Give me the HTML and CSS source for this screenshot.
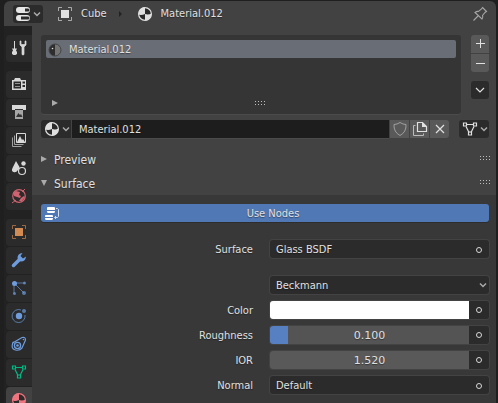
FILE: index.html
```html
<!DOCTYPE html>
<html lang="en">
<head>
<meta charset="utf-8">
<title>Material Properties</title>
<link rel="stylesheet" href="styles.css">
</head>
<body>
<svg class="defs" aria-hidden="true">
  <symbol id="ball" viewBox="0 0 16 16"><circle cx="8" cy="8" r="6.4" fill="#2b2b2b" stroke="currentColor" stroke-width="1.2"/><path d="M8 8V1.300C5 1.200 1.600 3.600 1.300 8.500Q4.500 9.500 8 8Z" fill="currentColor"/><path d="M8 8Q11.500 9 14.600 7.500C14.500 12 11 14.700 8 14.700Z" fill="currentColor"/></symbol>
  <symbol id="chev" viewBox="0 0 8 8"><path d="M1 2.500L4 5.500L7 2.500" fill="none" stroke="currentColor" stroke-width="1.500"/></symbol>
  <symbol id="object" viewBox="0 0 16 16"><path d="M4 4h8v8H4z" fill="currentColor"/><path d="M1.500 5V1.500H5M11 1.500h3.500V5M14.500 11v3.500H11M5 14.500H1.500V11" fill="none" stroke="currentColor" opacity=".65"/></symbol>
  <symbol id="mesh" viewBox="0 0 16 16"><path d="M4.500 3.500h7M4 5.500l3 6M12 5.500l-3 6" fill="none" stroke="currentColor" stroke-width="1.200"/><path d="M1.500 2h3v3h-3zM11.500 2h3v3h-3zM6.500 11h3v3h-3z" fill="none" stroke="currentColor" stroke-width="1.200"/></symbol>
  <symbol id="right" viewBox="0 0 6 6"><path d="M0 0L6 3L0 6z" fill="currentColor"/></symbol>
  <symbol id="down" viewBox="0 0 6 6"><path d="M0 0H6L3 6z" fill="currentColor"/></symbol>
  <symbol id="grip" viewBox="0 0 11 4"><path d="M0 0h1v1H0zM3 0h1v1H3zM6 0h1v1H6zM9 0h1v1H9zM0 3h1v1H0zM3 3h1v1H3zM6 3h1v1H6zM9 3h1v1H9z" fill="currentColor"/></symbol>
</svg>
<div class="editor">
  <header class="header">
    <button class="dark editor-type" aria-label="Editor type">
      <svg class="icon" viewBox="0 0 16 16"><rect x="1" y="1" width="14" height="6" rx="3" fill="#e6e6e6"/><rect x="1" y="9" width="14" height="6" rx="3" fill="#e6e6e6"/><path d="M10 2.500h3a1.500 1.500 0 0 1 0 3h-3zM6 10.500h7a1.500 1.500 0 0 1 0 3H6z" fill="#2b2b2b"/></svg>
      <svg class="chev"><use href="#chev"/></svg>
    </button>
    <nav class="crumbs" aria-label="Context">
      <svg class="icon"><use href="#object"/></svg><span class="crumb">Cube</span>
      <svg class="crumb-arrow" viewBox="0 0 4 6"><path d="M0 0L3 3L0 6z" fill="#222"/></svg>
      <svg class="icon"><use href="#ball"/></svg><span class="crumb">Material.012</span>
    </nav>
    <button class="pin" aria-label="Pin"><svg class="icon" viewBox="0 0 16 16"><path d="M1.500 14.500L6 10M10.500 1.500L14.500 5.500L13 6.500L10.500 9.500Q11.500 11.500 10 13L3 6.500Q5 5 6.500 5.500L9.500 3z" fill="none" stroke="#a5a5a5" stroke-width="1.100"/></svg></button>
  </header>
  <div class="columns">
    <nav class="tabs" aria-label="Property tabs">
      <button class="tab lone" aria-label="Tool"><svg class="icon" viewBox="0 0 16 16"><path d="M3.500 1v8" stroke="currentColor"/><path d="M1 8.500h5L5 10.500L6 12v2L4.500 15h-2L1 14v-2l1-1.500z" fill="currentColor"/><path d="M9 1v4L11 7v7.500Q12 15.500 13 14.500V7L15 5V1h-1v3.500h-4V1z" fill="currentColor" stroke="currentColor" stroke-width=".7"/></svg></button>
      <button class="tab" aria-label="Render"><svg class="icon" viewBox="0 0 16 16"><path fill-rule="evenodd" d="M1 4h2l1-2h5l1 2h5v10H1zM2.500 5.500v7H10v-7zM11.500 5.500v2H14v-2zM11.500 9v2H14V9z" fill="currentColor"/><path d="M4 7.500h5M4 10.500h5" stroke="currentColor" opacity=".6"/></svg></button>
      <button class="tab" aria-label="Output"><svg class="icon" viewBox="0 0 16 16"><path d="M1 1h14v5H1z" fill="currentColor"/><path d="M4 5h8v10H4z" fill="#a6a6a6"/><path d="M4 5h8v1H4zM5 13l2.500-4 1.500 2 1-1 1.500 3z" fill="#333"/></svg></button>
      <button class="tab" aria-label="View layer"><svg class="icon" viewBox="0 0 16 16"><path d="M5.500 1.500h9v9h-9z" fill="none" stroke="currentColor"/><path d="M6 10l3-6 2 4 1-1 2 3z" fill="currentColor"/><path d="M3.500 3.500v9h9M1.500 5.500v9h9" fill="none" stroke="#a0a0a0"/></svg></button>
      <button class="tab" aria-label="Scene"><svg class="icon" viewBox="0 0 16 16"><path d="M5 1L8.500 7Q9 9 7 10Q5 13 2.500 12T1.500 8z" fill="currentColor"/><circle cx="12.500" cy="3.500" r="2.200" fill="currentColor"/><circle cx="11" cy="11" r="3.500" fill="#2b2b2b" stroke="currentColor" stroke-width="1.200"/></svg></button>
      <button class="tab last world" aria-label="World"><svg class="icon" viewBox="0 0 16 16"><circle cx="8" cy="8" r="6.300" fill="none" stroke="currentColor" stroke-width="1.200"/><path d="M2 5L5 3L9 4L8 7L10 8L9 10L6 9L3 8zM10 10L13 8L14 9L11 13L8 13z" fill="currentColor"/><path d="M11 4l3-3" stroke="currentColor"/><path d="M1 15l4-3" stroke="currentColor"/></svg></button>
      <button class="tab object" aria-label="Object"><svg class="icon"><use href="#object"/></svg></button>
      <button class="tab blue" aria-label="Modifiers"><svg class="icon" viewBox="0 0 16 16"><path d="M2.500 13.500L9 7" stroke="currentColor" stroke-width="3.500" stroke-linecap="round"/><path d="M8 9L6.500 6Q6.500 1.500 11.500 1L9.500 4L12 6.500L15 4.500Q14.500 9.500 10 9.500z" fill="currentColor"/></svg></button>
      <button class="tab blue" aria-label="Particles"><svg class="icon" viewBox="0 0 16 16"><path d="M3 3H14M3 3V14M3 3L13 13" stroke="currentColor" opacity=".65"/><circle cx="3.500" cy="3.500" r="2.500" fill="currentColor"/><g fill="currentColor" opacity=".7"><circle cx="13.500" cy="3" r="1.500"/><circle cx="3.500" cy="13.500" r="1.500"/><circle cx="13" cy="13" r="2"/></g></svg></button>
      <button class="tab blue" aria-label="Physics"><svg class="icon" viewBox="0 0 16 16"><path d="M10 2A6.500 6.500 0 1 0 14 7" fill="none" stroke="currentColor" opacity=".7"/><circle cx="8" cy="8" r="3.200" fill="currentColor"/><circle cx="13" cy="3" r="2" fill="currentColor" opacity=".7"/></svg></button>
      <button class="tab blue" aria-label="Constraints"><svg class="icon" viewBox="0 0 16 16"><path d="M2.500 6.500L11 1.500Q14.500 .5 14.500 4L11 12Q8.500 15 4.500 14T1.300 9T2.500 6.500z" fill="none" stroke="currentColor" stroke-width="1.200"/><circle cx="6.500" cy="9.500" r="3.100" fill="none" stroke="currentColor" stroke-width="1.300"/><circle cx="6.500" cy="9.500" r="1.300" fill="currentColor"/><circle cx="12.500" cy="3.500" r=".8" fill="currentColor"/></svg></button>
      <button class="tab mesh" aria-label="Object data"><svg class="icon"><use href="#mesh"/></svg></button>
      <button class="tab active" aria-label="Material" aria-current="page"><svg class="icon"><use href="#ball"/></svg></button>
    </nav>
    <main class="main">
      <section class="slots">
        <div class="list">
          <button class="slot"><svg class="icon" viewBox="0 0 16 16"><circle cx="8" cy="8" r="6" fill="#747474"/><path d="M8 2a6 6 0 0 0 0 12z" fill="#2e2e2e"/><circle cx="8" cy="8" r="6" fill="none" stroke="#444"/><circle cx="5.500" cy="6.500" r=".8" fill="#ddd"/></svg>Material.012</button>
          <div class="list-foot"><svg class="tri"><use href="#right"/></svg><svg class="grip"><use href="#grip"/></svg></div>
        </div>
        <div class="side">
          <button class="gray top" aria-label="Add slot"><svg class="icon" viewBox="0 0 16 16"><path d="M4 7.500h9M8.500 3v9" stroke="currentColor" stroke-width="1"/></svg></button>
          <button class="gray bottom" aria-label="Remove slot"><svg class="icon" viewBox="0 0 16 16"><path d="M4 8.500h9" stroke="currentColor"/></svg></button>
          <button class="dark specials" aria-label="Slot menu"><svg class="icon" viewBox="0 0 16 16"><path d="M4 6l4 4 4-4" fill="none" stroke="currentColor" stroke-width="1.200"/></svg></button>
        </div>
      </section>
      <div class="datablock">
        <button class="dark browse" aria-label="Browse material"><svg class="icon"><use href="#ball"/></svg><svg class="chev"><use href="#chev"/></svg></button>
        <input class="name" aria-label="Material name" value="Material.012">
        <button class="gray" aria-label="Fake user"><svg class="icon" viewBox="0 0 16 16"><path d="M8 1.500Q11 3.500 14 3.500Q14.500 11 8 14.500Q1.500 11 2 3.500Q5 3.500 8 1.500z" fill="none" stroke="#a0a0a0"/></svg></button>
        <button class="gray" aria-label="New material"><svg class="icon" viewBox="0 0 16 16"><path d="M5.500 1.500h5l4 4v5h-9z" fill="none" stroke="currentColor" stroke-width="1.200"/><path d="M10 1v5h5z" fill="currentColor"/><path d="M3.500 4.500h-2v10h10v-2" fill="none" stroke="#bbb"/></svg></button>
        <button class="gray end" aria-label="Unlink"><svg class="icon" viewBox="0 0 16 16"><path d="M4 4l8 8M12 4l-8 8" stroke="currentColor" stroke-width="1.200"/></svg></button>
        <button class="dark link" aria-label="Link to"><svg class="icon"><use href="#mesh"/></svg><svg class="chev"><use href="#chev"/></svg></button>
      </div>
      <button class="panel-head" aria-expanded="false"><svg class="tri"><use href="#right"/></svg><span>Preview</span><svg class="grip"><use href="#grip"/></svg></button>
      <button class="panel-head" aria-expanded="true"><svg class="tri"><use href="#down"/></svg><span>Surface</span><svg class="grip"><use href="#grip"/></svg></button>
      <section class="panel">
        <button class="use-nodes" aria-pressed="true"><svg class="icon" viewBox="0 0 16 16"><path d="M4 2h6q1 0 1 1v2H3V3q0-1 1-1zM3 6h8q0 2-1 2H4Q3 8 3 6zM2 10h6q1 0 1 1v1H1v-1q0-1 1-1zM1 13h8q0 2-1 2H2q-1 0-1-2z" fill="#fff"/><path d="M12 3.500h1.500l1 1v7l-1 1H11M12 11l-1.500 1.500L12 14" fill="none" stroke="#d4deef"/></svg><span>Use Nodes</span></button>
        <div class="row surface"><label for="surface">Surface</label><button class="dark value" id="surface">Glass BSDF<i class="socket"></i></button></div>
        <div class="row"><span></span><div class="choice"><select class="dark" aria-label="Distribution"><option>Beckmann</option></select><svg class="chev"><use href="#chev"/></svg></div></div>
        <div class="row"><label for="color">Color</label><div class="pair"><input id="color" type="color" value="#ffffff"><button class="dark dot" aria-label="Color input"><i class="socket"></i></button></div></div>
        <div class="row"><label for="rough">Roughness</label><div class="pair"><input class="number slider" id="rough" value="0.100"><button class="dark dot" aria-label="Roughness input"><i class="socket"></i></button></div></div>
        <div class="row"><label for="ior">IOR</label><div class="pair"><input class="number" id="ior" value="1.520"><button class="dark dot" aria-label="IOR input"><i class="socket"></i></button></div></div>
        <div class="row"><label for="normal">Normal</label><button class="dark value" id="normal">Default<i class="socket"></i></button></div>
      </section>
    </main>
  </div>
</div>
</body>
</html>
```
FILE: styles.css
```css
* { box-sizing: border-box; }
html, body { height: 100%; }
body {
  margin: 0;
  padding: 1px 2px 0 4px;
  overflow: hidden;
  background: #1f1f1f;
  color: #e0e0e0;
  font: 11px/16px "DejaVu Sans Condensed", "DejaVu Sans", sans-serif;
  text-shadow: 0 1px 1px rgba(0, 0, 0, .4);
}
button, input, select {
  margin: 0;
  padding: 0;
  border: 0;
  border-radius: 0;
  background: none;
  color: inherit;
  font: inherit;
  text-shadow: inherit;
  min-width: 0;
}
svg { flex: none; display: block; }
.defs { position: absolute; width: 0; height: 0; }
.icon { width: 16px; height: 16px; }
.chev { width: 8px; height: 8px; color: #aaa; }
.tri { width: 6px; height: 6px; color: #aaa; }
.grip { width: 11px; height: 4px; color: #bdbdbd; }

.editor {
  height: 100%;
  display: flex;
  flex-direction: column;
  border-radius: 6px 6px 0 0;
  overflow: hidden;
  background: #424242;
}
.header { display: flex; align-items: center; height: 25px; padding: 0 8px 0 9px; flex: none; }
.dark { background: #2b2b2b; border-radius: 3px; box-shadow: 0 0 0 1px #434343; }
.header .dark { box-shadow: none; }
.editor-type { display: flex; align-items: center; width: 30px; height: 18px; padding: 0 2px; gap: 2px; }
.crumbs { display: flex; align-items: center; margin-left: 14px; }
.crumb { margin-left: 8px; }
.crumb-arrow { width: 4px; height: 6px; margin: 0 14px 0 12px; }
.pin { margin-left: auto; }

.columns { display: flex; flex: 1; min-height: 0; }
.tabs { width: 28px; flex: none; padding: 9px 0 0 2px; background: #222; color: #d8d8d8; overflow: hidden; }
.tab {
  display: flex;
  align-items: center;
  width: 100%;
  height: 27px;
  margin-bottom: 1px;
  padding: 0 0 1px 5px;
  background: #2b2b2b;
  border-radius: 4px 0 0 4px;
}
.tab.lone { margin-bottom: 9px; }
.tab.last { margin-bottom: 9px; }
.world { color: #cf6370; }
.object { color: #d28b52; }
.blue { color: #6e9cdc; }
.mesh { color: #00b883; }
.active { background: #424242; color: #ee7580; }

.main { flex: 1; min-width: 0; display: flex; flex-direction: column; padding-top: 9px; }
.slots, .datablock { display: flex; margin: 0 7px 0 9px; }
.slots { gap: 10px; }
.list {
  flex: 1;
  display: flex;
  flex-direction: column;
  justify-content: space-between;
  height: 79px;
  padding: 5px;
  background: #353535;
  border-radius: 3px;
  box-shadow: 0 1px 0 #4b4b4b;
}
.slot { display: flex; align-items: center; height: 18px; padding: 1px 0 0 1px; gap: 6px; background: #696d76; border-radius: 2px; }
.list-foot { display: grid; grid-template-columns: 6px 1fr; column-gap: 6px; align-items: center; justify-items: center; padding: 0 0 3px 6px; }
.side { display: flex; flex-direction: column; width: 18px; }
.gray { display: flex; align-items: center; justify-content: center; width: 19px; height: 18px; background: #595959; }
.side .gray { width: 18px; margin-bottom: 1px; }
.top { border-radius: 3px 3px 0 0; }
.bottom { border-radius: 0 0 3px 3px; }
.specials { height: 18px; margin-top: 8px; padding: 0 1px; }

.datablock { gap: 1px; margin-top: 6px; }
.browse, .link { display: flex; align-items: center; gap: 2px; width: 30px; height: 18px; padding: 0 3px; flex: none; }
.browse { border-radius: 3px 0 0 3px; }
.name { flex: 1; height: 18px; padding: 1px 0 0 7px; background: #1d1d1d; box-shadow: 0 1px 0 #4b4b4b; }
.end { border-radius: 0 3px 3px 0; }
.link { margin-left: 9px; }

.panel-head { display: flex; align-items: center; gap: 7px; height: 24px; padding: 0 5px 0 9px; font-size: 12px; flex: none; }
.panel-head span { padding-top: 2px; }
.datablock + .panel-head { margin-top: 9px; }
.panel-head .grip { margin: 0 0 2px auto; }

.panel { flex: 1; background: #383838; padding: 9px 7px 0 9px; }
.use-nodes { display: grid; grid-template-columns: 16px 1fr; align-items: center; width: 100%; height: 18px; padding: 0 3px; background: #5078b4; border-radius: 3px; box-shadow: 0 1px 0 #2d2d2d; }
.use-nodes span { padding-top: 1px; }
.row { display: grid; grid-template-columns: minmax(0, 23fr) minmax(0, 22fr); height: 18px; margin-top: 7px; }
.row label { padding: 2px 17px 0 0; text-align: right; }
.row.surface { margin: 18px 0; }
.value { display: flex; align-items: center; justify-content: space-between; padding: 1px 7px 0 6px; }
.socket { width: 6px; height: 6px; border: 1px solid #d8d8d8; border-radius: 50%; }
.choice { display: grid; grid-template-columns: 1fr 10px; align-items: center; }
.choice select { appearance: none; grid-area: 1 / 1 / 2 / 3; height: 18px; padding: 1px 0 0 6px; }
.choice .chev { grid-area: 1 / 2; pointer-events: none; }
.surface + .row { margin-top: 0; }
.pair { display: flex; border-radius: 3px; box-shadow: 0 0 0 1px #434343; }
.pair input { flex: 1; height: 18px; border-radius: 3px 0 0 3px; }
.dot { display: flex; align-items: center; justify-content: center; width: 20px; border-radius: 0 3px 3px 0; box-shadow: none; }
input[type="color"] { appearance: none; background: #fff; overflow: hidden; }
input[type="color"]::-webkit-color-swatch-wrapper { padding: 0; }
input[type="color"]::-webkit-color-swatch { border: 0; }
.pair .number { padding-top: 1px; text-align: center; background: #595959; font-family: "DejaVu Sans", sans-serif; }
.pair .slider { background: linear-gradient(90deg, #5680c2 9%, #545454 9%); }
```
